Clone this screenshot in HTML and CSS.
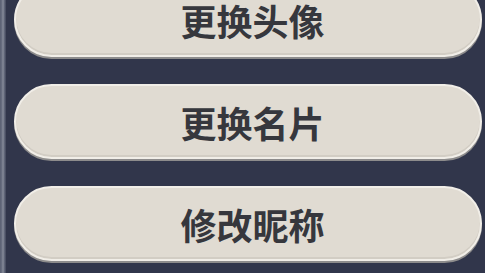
FILE: index.html
```html
<!DOCTYPE html>
<html lang="zh">
<head>
<meta charset="utf-8">
<link rel="stylesheet" href="styles.css">
</head>
<body>
<div class="panel">
  <div class="edge"></div>
  <div class="list">
    <button class="btn">更换头像</button>
    <button class="btn">更换名片</button>
    <button class="btn">修改昵称</button>
  </div>
</div>
</body>
</html>
```
FILE: styles.css
```css
html, body {
  margin: 0;
  padding: 0;
  width: 485px;
  height: 273px;
  overflow: hidden;
  background: #31364b;
}
.panel {
  display: flex;
  height: 273px;
}
.edge {
  width: 6px;
  flex: none;
  background: linear-gradient(to right, #5a6072 0, #6b7183 2px, #8b909d 3px, #6a7082 4px, #41465a 6px);
}
.list {
  flex: 1;
  display: flex;
  flex-direction: column;
  gap: 27px;
  margin-top: -18px;
  padding-left: 8px;
  padding-right: 3px;
}
.btn {
  height: 75px;
  flex: none;
  border-radius: 38px;
  border: 2px solid #f1eee8;
  background: #e0dbd2;
  box-shadow: 0 2px 0 #8d8c8c, inset 0 -2px 0 #d2cdc4;
  font-family: "Noto Sans CJK SC", "Noto Sans", sans-serif;
  font-weight: 700;
  font-size: 36px;
  color: #36373d;
  padding: 0 0 0 9px;
  line-height: 1;
  letter-spacing: 0;
  text-align: center;
}
```
